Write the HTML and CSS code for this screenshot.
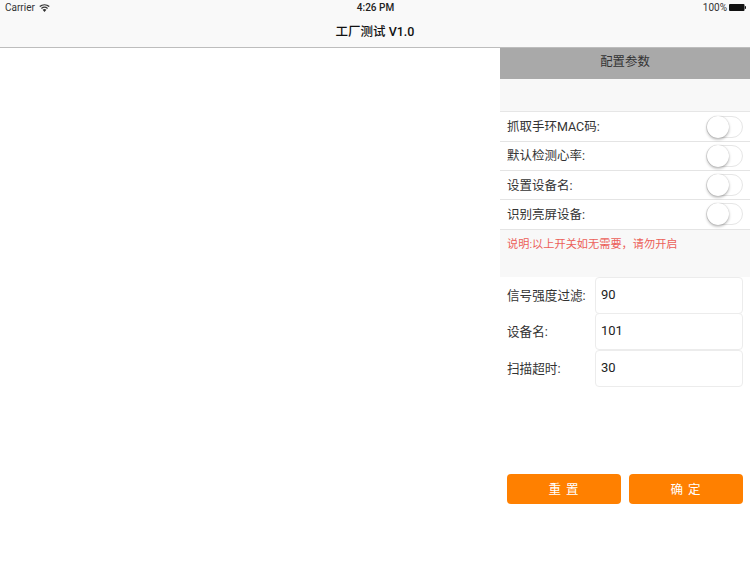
FILE: index.html
```html
<!DOCTYPE html>
<html lang="zh">
<head>
<meta charset="utf-8">
<title>工厂测试</title>
<link rel="stylesheet" href="styles.css">
</head>
<body>
<div class="app">
  <header class="topbar">
    <div class="status">
      <div class="status-left">
        <span>Carrier</span>
        <svg class="wifi" width="11" height="8" viewBox="0 0 11 8"><path d="M5.5 8 3.6 5.8a2.9 2.9 0 0 1 3.8 0zM2.8 4.9 2 4a5.4 5.4 0 0 1 7 0l-.8.9a4.2 4.2 0 0 0-5.4 0zM1.2 3.1.3 2.1a8 8 0 0 1 10.4 0l-.9 1a6.7 6.7 0 0 0-8.6 0z" fill="#333"/></svg>
      </div>
      <div class="status-time">4:26 PM</div>
      <div class="status-right">
        <span>100%</span>
        <svg width="17" height="7" viewBox="0 0 17 7"><rect x="0" y="0" width="15.5" height="7" rx="1" fill="#111"/><rect x="15.8" y="2.2" width="1.2" height="2.6" fill="#111"/></svg>
      </div>
    </div>
    <div class="nav-title">工厂测试 V1.0</div>
  </header>
  <main class="content">
    <div class="canvas"></div>
    <aside class="panel">
      <div class="panel-title">配置参数</div>
      <div class="strip"></div>
      <div class="toggles">
        <div class="row"><span class="row-label">抓取手环MAC码:</span><i class="switch"></i></div>
        <div class="row"><span class="row-label">默认检测心率:</span><i class="switch"></i></div>
        <div class="row"><span class="row-label">设置设备名:</span><i class="switch"></i></div>
        <div class="row"><span class="row-label">识别亮屏设备:</span><i class="switch"></i></div>
      </div>
      <div class="note">说明:以上开关如无需要，请勿开启</div>
      <div class="fields">
        <div class="field"><label>信号强度过滤:</label><div class="input">90</div></div>
        <div class="field"><label>设备名:</label><div class="input">101</div></div>
        <div class="field"><label>扫描超时:</label><div class="input">30</div></div>
      </div>
      <div class="actions">
        <button class="btn">重 置</button>
        <button class="btn">确 定</button>
      </div>
    </aside>
  </main>
</div>
</body>
</html>
```
FILE: styles.css
```css
* { box-sizing: border-box; }
html, body { margin: 0; padding: 0; background: #fff; }
body { font-family: Roboto, "Noto Sans CJK SC", sans-serif; color: #111; }
.app { width: 750px; height: 563px; overflow: hidden; display: flex; flex-direction: column; }
.topbar { height: 48px; background: #f9f9f9; border-bottom: 1px solid #bdbdbd; flex: none; }
.status { height: 15px; display: grid; grid-template-columns: 1fr auto 1fr; align-items: center; padding: 0 4px 0 5px; font-size: 10px; color: #333; }
.status-left { display: flex; align-items: center; gap: 4px; }
.status-time { font-weight: 500; font-size: 10px; color: #222; }
.status-right { display: flex; align-items: center; justify-content: flex-end; gap: 2px; }
.nav-title { text-align: center; font-size: 12.5px; font-weight: 500; line-height: 17px; margin-top: 8px; color: #111; }
.content { flex: 1; display: flex; }
.canvas { flex: 1; }
.panel { width: 250px; flex: none; display: flex; flex-direction: column; }
.panel-title { height: 31px; background: #a9a9a9; text-align: center; line-height: 28px; font-size: 12.4px; color: #333; }
.strip { height: 33px; background: #f8f8f8; border-bottom: 1px solid #e6e6e6; }
.toggles { padding-top: .5px; }
.row { height: 29.25px; padding: 0 7px; display: flex; align-items: center; justify-content: space-between; font-size: 12.5px; color: #333; border-bottom: 1px solid #e4e4e4; background: #fff; }
.row-label { padding-bottom: 2px; }
.switch { display: block; width: 37px; height: 22px; border-radius: 11px; border: 1px solid #e6e6e6; background: #fff; position: relative; }
.switch::after { content: ""; position: absolute; left: 0; top: -1px; width: 22px; height: 22px; border-radius: 50%; background: #fff; box-shadow: 0 1.5px 3px rgba(0,0,0,.3), 0 0 1px rgba(0,0,0,.2); }
.note { height: 47.5px; background: #f8f8f8; padding: 7px 7px 0; font-size: 11.2px; line-height: 15px; color: #ec5f58; }
.fields { display: flex; flex-direction: column; }
.field { height: 36.5px; display: flex; align-items: center; padding: 0 7px; }
.field label { width: 88px; flex: none; font-size: 12.6px; color: #333; padding-bottom: 2px; }
.input { width: 148px; height: 37px; border: 1px solid #ececec; border-radius: 4px; background: #fff; font-size: 13px; line-height: 34px; padding-left: 5px; color: #222; flex: none; }
.actions { display: flex; gap: 8px; padding: 0 7px; margin-top: 87.5px; }
.btn { flex: 1; height: 30px; border: 0; border-radius: 4px; background: #ff8000; color: #fff; font-family: inherit; font-size: 12.5px; padding: 0 0 2px; letter-spacing: 1px; }
```
